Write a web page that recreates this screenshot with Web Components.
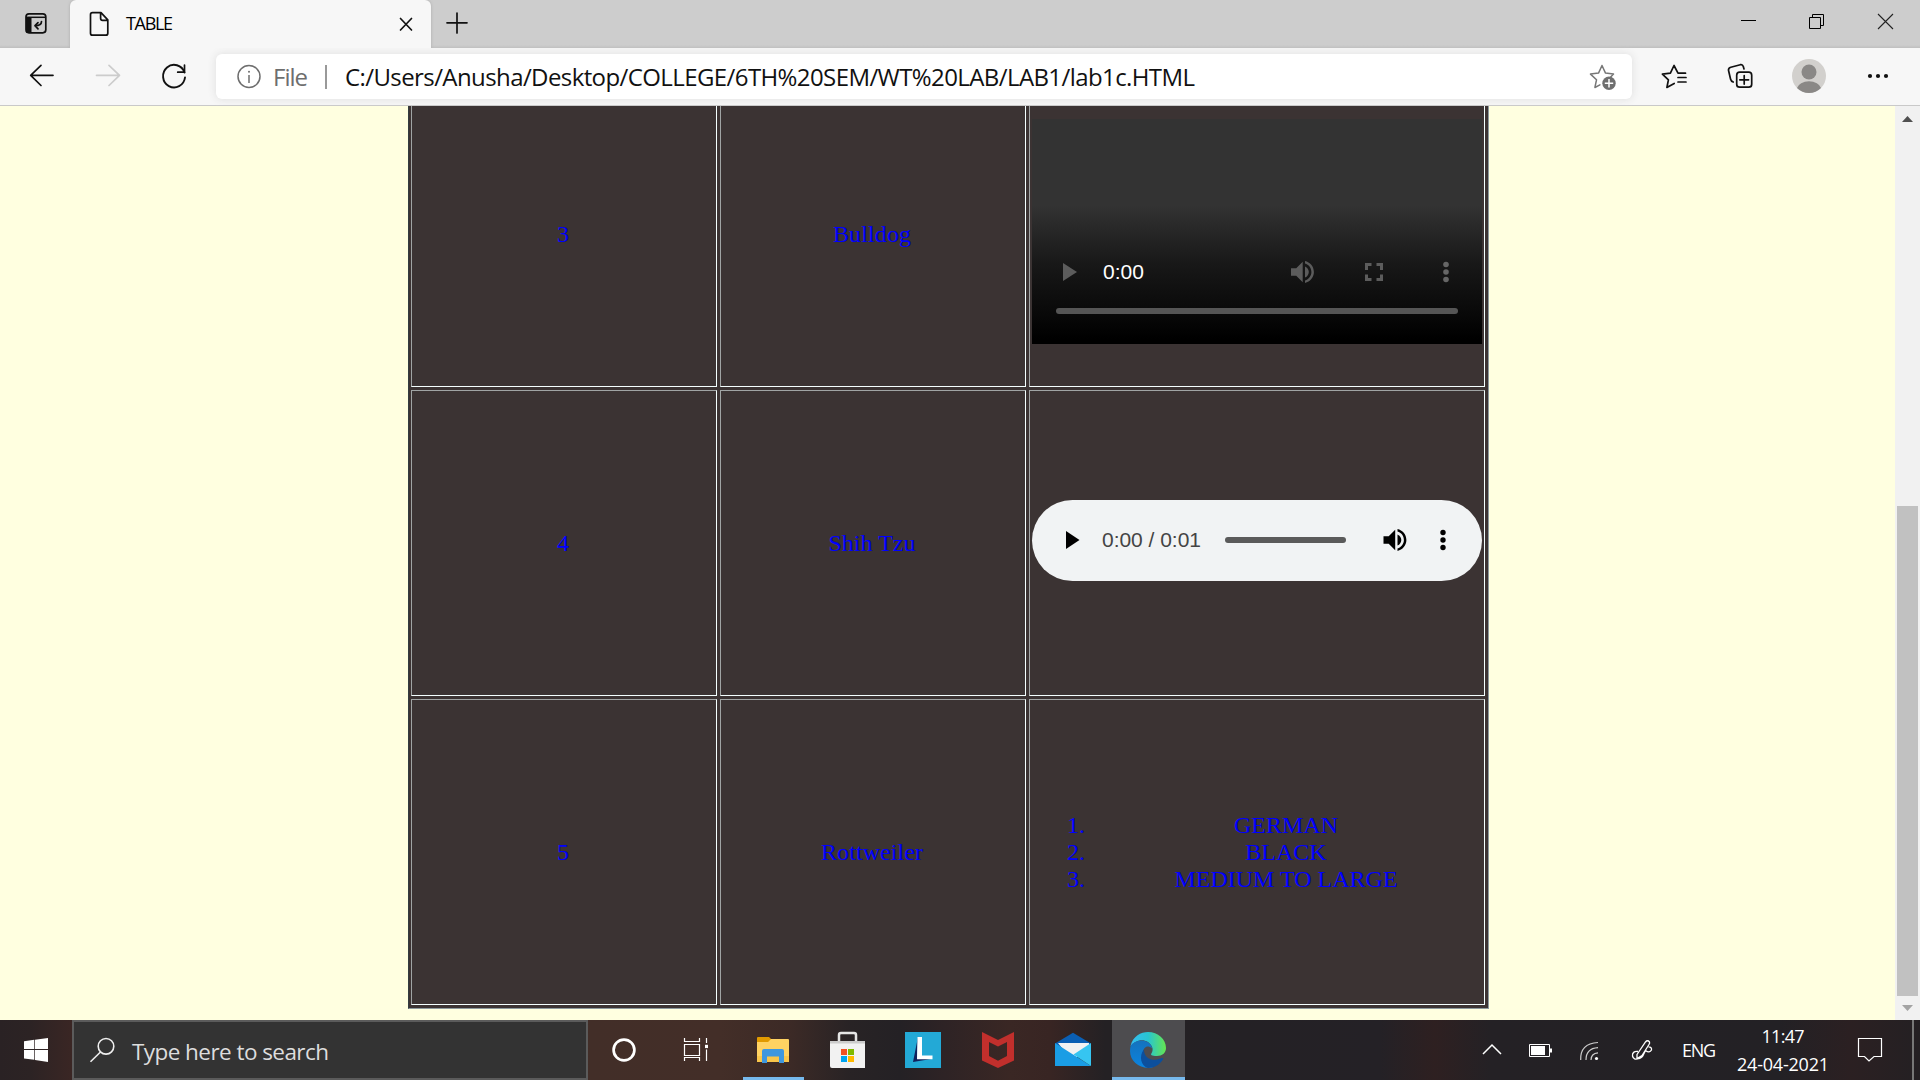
<!DOCTYPE html>
<html lang="en">
<head>
<meta charset="utf-8">
<title>TABLE</title>
<style>
html,body{margin:0;height:100%;overflow:hidden;background:#ffffe0}
body{font-family:"Open Sans","Noto Sans",sans-serif}
</style>
</head>
<body>
<desktop-screen></desktop-screen>
<script>
// Icon artwork: [x, y, width, height, markup]; each viewBox is in screen units.
const K='fill="none" stroke="#111" stroke-width="1.7" stroke-linecap="round" stroke-linejoin="round"';
const W='fill="none" stroke="#fff" stroke-width="1.2"';
const speaker=(x,y,c)=>`<g transform="translate(${x} ${y})" fill="${c}"><path d="M0 7.2h5.2L11.7.8v20.4L5.2 14.8H0z"/><path d="M14 5.4c2.3 1 3.8 3.1 3.8 5.6s-1.500 4.600-3.800 5.600z"/><path d="M14 .1c5 1.100 8.900 5.500 8.900 10.900S19 20.800 14 21.900v-2.500c3.700-1.100 6.400-4.400 6.400-8.400S17.700 3.700 14 2.600z"/></g>`;
const ICONS={
 tabs:[25,0,22,47,`<rect x="26" y="13.800" width="19.800" height="19" rx="3" ${K}/><path d="M26 17h5.500v16H28q-2 0-2-3z" fill="#111"/><path d="M26 17.300h20" stroke="#111" stroke-width="1.500"/><path d="M41.500 21.500q0 4.200-6.500 4.200m3-3-3 3 3 3.200" ${K}/>`],
 doc:[89,0,20,47,`<path d="M92.500 12.700h8.500l6.800 7.200v13.300q0 2-2 2H92.500q-2 0-2-2V14.700q0-2 2-2zM100.600 13v5.200q0 2.200 2 2.200h5" ${K}/>`],
 close:[399,0,14,47,`<path d="M400.500 18.500l11 11.500m0-11.500-11 11.500" ${K}/>`],
 plus:[446,0,22,47,`<path d="M457 13v20M447 22.800h20" ${K}/>`],
 min:[1740,0,17,47,`<path d="M1741 20.500h15" stroke="#000"/>`],
 restore:[1808,0,17,47,`<path d="M1809.500 17.500h11v11h-11zM1812.500 17v-2.500h11v11h-3" fill="none" stroke="#000"/>`],
 xwin:[1877,0,17,47,`<path d="M1878 14l15 15m0-15-15 15" stroke="#222" stroke-width="1.100"/>`],
 back:[29,48,26,57,`<path d="M53 75.300H31m10-10-10.300 10L41 85.500" ${K}/>`],
 fwd:[95,48,26,57,`<path d="M96.500 75.300h23m-10.500-10 10.500 10-10.500 10.200" ${K.replace('#111','#ccc')}/>`],
 reload:[161,48,26,57,`<path d="M184.500 72.500a11 11.300 0 1 0 .5 5" ${K.replace('1.7','1.9')}/><path d="M184.500 65v7.200h-6.800" ${K}/>`],
 info:[236,54,26,45,`<circle cx="249" cy="76.500" r="11" fill="none" stroke="#6e6e6e" stroke-width="1.500"/><path d="M249 75v8" stroke="#6e6e6e" stroke-width="1.500"/><circle cx="249" cy="71.700" r="1" fill="#6e6e6e"/>`],
 staradd:[1589,54,28,45,`<path d="M1602 65.500l3.500 7.600 8 1-3 3.200M1602 65.500l-3.500 7.600-8 1 6 5.700-1.600 7.700 5-2.600" ${K.replace('#111','#777').replace('1.7','1.5')}/><circle cx="1609" cy="83.200" r="6.700" fill="#6f6f6f"/><path d="M1609 79v8.400M1604.800 83.200h8.400" stroke="#fff" stroke-width="1.500"/>`],
 fav:[1661,48,26,57,`<path d="M1685.500 73.200h-7.500l-4-7.700-3.600 7.600-8 1 6 5.700-1.500 7.700 7.300-4M1678 77.500h8M1678 82h8" ${K}/>`],
 coll:[1727,48,26,57,`<rect x="1736.700" y="72.200" width="15" height="15" rx="3" ${K}/><path d="M1744.200 75.500v8.600M1739.800 79.800h8.800M1744 69l-.7-2.500q-.7-2.300-3-1.800l-9.500 2.500q-2.800.8-2.200 3.500l2 8.500q.5 2 2.600 2.800" ${K}/>`],
 avatar:[1791,48,36,57,`<circle cx="1809" cy="76" r="17" fill="#d2d0cd"/><circle cx="1809" cy="72" r="7.500" fill="#8a8886"/><path d="M1797 88a12.200 8.200 0 0 1 24 0 17 17 0 0 1-24 0z" fill="#8a8886"/>`],
 dots:[1867,48,22,57,`<g fill="#111"><circle cx="1870" cy="76" r="2.100"/><circle cx="1878" cy="76" r="2.100"/><circle cx="1886" cy="76" r="2.100"/></g>`],
 vplay:[1063,250,15,45,`<path d="M1063 263v18l14-9z" fill="#5c5c5c"/>`],
 vvol:[1290,250,25,45,speaker(1291,261,'#5c5c5c')],
 vfull:[1364,250,20,45,`<path d="M1366.500 270v-5.500h5m5 0h5v5.500m0 4.500v5h-5m-5 0h-5v-5" fill="none" stroke="#5c5c5c" stroke-width="3"/>`],
 vdots:[1442,250,8,45,`<g fill="#666"><circle cx="1446" cy="264.500" r="2.800"/><circle cx="1446" cy="272" r="2.800"/><circle cx="1446" cy="279.500" r="2.800"/></g>`],
 aplay:[1065,500,16,81,`<path d="M1066 531v18l13.500-9z"/>`],
 avol:[1383,500,25,81,speaker(1383.5,529,'#000')],
 adots:[1439,500,8,81,`<circle cx="1443" cy="532.500" r="2.700"/><circle cx="1443" cy="540" r="2.700"/><circle cx="1443" cy="547.500" r="2.700"/>`],
 up:[1895,106,25,28,`<path d="M1902 122l5.500-6 5.500 6z" fill="#505050"/>`],
 down:[1895,998,25,22,`<path d="M1902 1005l5.500 6 5.500-6z" fill="#a3a3a3"/>`],
 start:[24,1020,24,60,`<path d="M24 1041.200l10.300-1.400v9.200H24zm11-1.500 13-1.700v11H35zM24 1050h10.300v9.800L24 1058.500zm11 0h13v12l-13-1.900z" fill="#fff"/>`],
 search:[89,1022,27,56,`<circle cx="106" cy="1046.300" r="7.800" fill="none" stroke="#eee" stroke-width="1.600"/><path d="M100.500 1052l-10 9.800" stroke="#eee" stroke-width="1.600"/>`],
 cortana:[611,1020,26,60,`<circle cx="624" cy="1050" r="10.400" fill="none" stroke="#fff" stroke-width="2.700"/>`],
 tasks:[683,1020,26,60,`<path d="M684.500 1038v3.500h15V1038M684.500 1044.500h15v11h-15zM684.500 1061v-3.500h15v3.500M706.500 1038v5M706.500 1049.500v11.500" ${W}/><path d="M705 1044.800h3v3.300h-3z" fill="#fff"/>`],
 folder:[756,1020,34,60,`<path d="M757 1038q0-1 1-1h11l3 3-3 4h-12z" fill="#e19a00"/><path d="M757 1042h11l3-3h17q1 0 1 1v22h-32z" fill="#ffd262"/><path d="M757 1056h32v6h-32z" fill="#f9c64b"/><path d="M762 1063v-12q0-2 2-2h18q2 0 2 2v12h-5v-6.500h-12v6.500z" fill="#3e97df"/>`],
 store:[829,1020,37,60,`<path d="M839 1042v-7q0-2 2-2h13q2 0 2 2v7" fill="none" stroke="#e5e5e5" stroke-width="2.500"/><path d="M830 1041h35v27h-33q-2 0-2-2z" fill="#f2f2f2"/><path d="M830 1041h35v2.500h-35z" fill="#ccc"/><path d="M841 1049h6v6h-6z" fill="#f25022"/><path d="M848 1049h6v6h-6z" fill="#7fba00"/><path d="M841 1056h6v6h-6z" fill="#00a4ef"/><path d="M848 1056h6v6h-6z" fill="#ffb900"/>`],
 lapp:[905,1020,36,60,`<path d="M905 1032h36v36h-36z" fill="#23a9d6"/><path d="M918 1037l-5 25 18-3-14-1z" fill="#10205c"/><path d="M917.500 1037h4.500v18.500h10.500v3.700H917z" fill="#fff"/>`],
 mcafee:[981,1020,34,60,`<path d="M982 1032l16 8 16-8v28.500l-16 7.500-16-7.500zM989 1042v14l9 4.700 9-4.700v-14l-9 4.500z" fill="#c12f2c" fill-rule="evenodd"/>`],
 mail:[1054,1020,38,60,`<path d="M1055 1043.500l18-10.800 18 10.800-4 4h-28z" fill="#0a5fb4"/><path d="M1058 1043h31v8l-12 6h-8z" fill="#f2f2f2"/><path d="M1055 1043l18 11.500 18 11.500h-36z" fill="#1a9de5"/><path d="M1091 1043l-17.500 11.500 17.500 11.500z" fill="#36c5f1"/>`],
 edge:[1129,1020,38,60,`<defs><linearGradient id="a" x1="0" x2="1"><stop offset="0" stop-color="#35bdf3"/><stop offset=".5" stop-color="#28c5d0"/><stop offset="1" stop-color="#65e650"/></linearGradient><linearGradient id="b" x1="0" x2="0" y1="0" y2="1"><stop offset="0" stop-color="#1572bd"/><stop offset="1" stop-color="#0a84e0"/></linearGradient></defs><path d="M1130.500 1046C1133 1036 1141 1032 1148 1032c10 0 18 7 18 16 0 5-4 8-9 8-5.500 0-7-1.200-5.300-3 2.300-4 .3-8-3.700-11-6-4-13.500-1-17.500 4z" fill="url(#a)"/><path d="M1130.700 1045.500c5.300-6.500 15.300-6.500 19.300-1.500 2 2 2 4.500 2 4.500-4-4-9-1.500-9 4.500 0 7 4 13.500 10 14.300-12 2.700-23-5.300-23-16.300q0-3 .7-5.500z" fill="url(#b)"/><path d="M1144 1049.500c-.3 7.500 6 11.500 13 10 3.500-.8 6-2.500 6.300-.7-3.300 6.200-9.500 9.200-15.300 9.200-7-2-9.500-12-4-18.500z" fill="#0c4f9c"/>`],
 chev:[1482,1020,20,60,`<path d="M1483 1054l9-9 9 9" ${W.replace('1.2','1.5')}/>`],
 batt:[1528,1020,25,60,`<path d="M1529.500 1044.500h20v12h-20z" ${W.replace('1.2','1')}/><path d="M1531 1046h14v9h-14zM1550 1048.500h2v4h-2z" fill="#fff"/>`],
 wifi:[1579,1020,20,60,`<path d="M1580.700 1060q-.7-16.500 17.300-17.500M1586 1060q0-11.500 12-12.300M1591 1060q0-6.700 7-7.200" ${W.replace('#fff','#ccc')}/><circle cx="1596.500" cy="1058.500" r="1.600" fill="#fff"/>`],
 pen:[1631,1020,23,60,`<path d="M1637 1054.500l8.500-12.500q2-2.500 4 0 .5 1-.5 2.500l-7 11-5 3zM1638 1051.500q-6-.5-5.500 4.500 1 4.500 6.500 2.500 3.500-1 4.500-4l2-4q4 3 6-.5.500-3-3-3.200" ${W.replace('1.2','1.3')}/>`],
 note:[1857,1020,26,60,`<path d="M1858.500 1038.500h23v18h-7.500l-5 4.500-4.500-4.500h-6z" ${W}/>`],
};
const comp=(name,html,after)=>customElements.define(name,class extends HTMLElement{
 connectedCallback(){
  if(this.shadowRoot)return;
  const t=document.createElement('template');t.innerHTML=html;
  this.attachShadow({mode:'open'}).append(t.content.cloneNode(true));
  if(after)after(this);
 }});

comp('ui-icon','<style>:host{display:block;flex:none}svg{display:block}</style>',el=>{
 const [x,y,w,h,m]=ICONS[el.getAttribute('name')];
 const d=document.createElement('div');
 d.innerHTML=`<svg width="${w}" height="${h}" viewBox="${x} ${y} ${w} ${h}">${m}</svg>`;
 el.shadowRoot.append(d.firstChild);
});

comp('desktop-screen',`<style>:host{display:flex;flex-direction:column;width:1920px;height:1080px;overflow:hidden}</style>
<tab-strip></tab-strip><tool-bar></tool-bar><page-view></page-view><task-bar></task-bar>`);

comp('tab-strip',`<style>
:host{display:flex;height:48px;flex:none;background:linear-gradient(#cdcdcd 45px,#bfbfbf)}
.pin{width:70px;display:flex;padding-left:25px;box-sizing:border-box}
.tab{position:relative;display:flex;width:361px;background:#f7f7f7;border-radius:6px 6px 0 0;box-shadow:0 0 3px #aaa;clip-path:inset(0 -4px)}
.t{font-size:18px;line-height:24px;margin:11px 0 0 17px;width:273px}
</style><div class="pin"><ui-icon name="tabs"></ui-icon></div>
<div class="tab"><ui-icon name="doc" style="margin-left:19px"></ui-icon><div class="t"><fit-text w="47">TABLE</fit-text></div><ui-icon name="close"></ui-icon></div>
<ui-icon name="plus" style="margin-left:15px"></ui-icon>
<ui-icon name="min" style="margin-left:auto"></ui-icon><ui-icon name="restore" style="margin-left:51px"></ui-icon><ui-icon name="xwin" style="margin:0 26px 0 52px"></ui-icon>`);

comp('tool-bar',`<style>
:host{display:flex;height:58px;flex:none;box-sizing:border-box;background:#f7f7f7;border-bottom:1px solid #c9c9c9;font-size:24px;line-height:32px}
.addr{display:flex;width:1416px;height:45px;margin:6px 29px 0 29px;background:#fff;border-radius:6px;box-shadow:0 0 8px #ddd;box-sizing:border-box}
.f{color:#6e6e6e;margin:7px 0 0 11px;width:52px}
.s{width:2px;height:24px;background:#999;margin-top:11px}
.u{color:#111;margin:7px 0 0 18px;width:1244px}
</style>
<ui-icon name="back" style="margin-left:29px"></ui-icon><ui-icon name="fwd" style="margin-left:40px"></ui-icon><ui-icon name="reload" style="margin-left:40px"></ui-icon>
<div class="addr"><ui-icon name="info" style="margin-left:20px"></ui-icon><div class="f"><fit-text w="35">File</fit-text></div><div class="s"></div><div class="u"><fit-text w="850">C:/Users/Anusha/Desktop/COLLEGE/6TH%20SEM/WT%20LAB/LAB1/lab1c.HTML</fit-text></div><ui-icon name="staradd"></ui-icon></div>
<ui-icon name="fav"></ui-icon><ui-icon name="coll" style="margin-left:40px"></ui-icon><ui-icon name="avatar" style="margin-left:38px"></ui-icon><ui-icon name="dots" style="margin-left:40px"></ui-icon>`);

comp('page-view',`<style>
:host{display:flex;height:914px;flex:none;overflow:hidden;background:#ffffe0}
.doc{display:flex;flex-direction:column;justify-content:flex-end;width:1895px;box-sizing:border-box;padding:0 0 11px 408px;height:914px;overflow:hidden}
</style><div class="doc"><dog-table></dog-table></div><scroll-bar></scroll-bar>`);

comp('scroll-bar',`<style>
:host{display:flex;flex-direction:column;align-items:center;width:25px;background:#f1f1f1}
.g{flex:1}.th{width:21px;height:490px;background:#c1c1c1}
</style><ui-icon name="up"></ui-icon><div class="g"></div><div class="th"></div><ui-icon name="down" style="margin-top:2px"></ui-icon>`);

comp('dog-table',`<style>
:host{display:grid;flex:none;grid-template-columns:306px 306px 456px;grid-auto-rows:306px;gap:3px;width:1081px;height:931px;box-sizing:border-box;padding:2px 3px 3px 2px;background:#3b3333;border:1px solid #8d9a9e;border-left-color:#333d40;color:#00f;font:24px/27px "Liberation Serif",serif}
ol{margin:0 2px 0 0;padding:0 0 0 60px;width:390px;text-align:center}
dog-cell:not(:nth-of-type(3n)){padding-right:2px}
</style>
<dog-cell>3</dog-cell><dog-cell><fit-text w="78">Bulldog</fit-text></dog-cell><dog-cell><video-box></video-box></dog-cell>
<dog-cell>4</dog-cell><dog-cell><fit-text w="87">Shih Tzu</fit-text></dog-cell><dog-cell><audio-box></audio-box></dog-cell>
<dog-cell>5</dog-cell><dog-cell><fit-text w="102">Rottweiler</fit-text></dog-cell><dog-cell><ol><li>GERMAN</li><li>BLACK</li><li>MEDIUM TO LARGE</li></ol></dog-cell>`);

comp('dog-cell',`<style>:host{display:flex;align-items:center;justify-content:center;box-sizing:border-box;border:1px solid #f4ffff;border-top-color:#a0a4a4;border-left-color:#a0a4a4}</style><slot></slot>`);

comp('video-box',`<style>
:host{display:flex;flex-direction:column;justify-content:flex-end;width:450px;height:225px;margin-bottom:5px;background:linear-gradient(#333 0,#333 86px,#262626 114px,#181818 145px,#0a0a0a 190px,#000 220px)}
.c{display:flex;height:45px}
.t{color:#fff;font:21px/24px "Liberation Sans",sans-serif;margin:10px 0 0 25px;width:187px}
.tr{height:6px;border-radius:3px;background:#555;margin:13px 24px 30px}
</style><div class="c"><ui-icon name="vplay" style="margin-left:31px"></ui-icon><div class="t"><fit-text w="41">0:00</fit-text></div><ui-icon name="vvol"></ui-icon><ui-icon name="vfull" style="margin-left:49px"></ui-icon><ui-icon name="vdots" style="margin-left:58px"></ui-icon></div><div class="tr"></div>`);

comp('audio-box',`<style>
:host{display:flex;width:450px;height:81px;margin-bottom:5px;border-radius:41px;background:#f1f3f4}
.t{color:#444;font:21px/24px "Liberation Sans",sans-serif;margin:28px 0 0 21px;width:123px}
.tr{width:121px;height:6px;border-radius:3px;background:#5a5a5a;margin-top:37px}
</style><ui-icon name="aplay" style="margin-left:33px"></ui-icon><div class="t"><fit-text w="99">0:00 / 0:01</fit-text></div><div class="tr"></div><ui-icon name="avol" style="margin-left:37px"></ui-icon><ui-icon name="adots" style="margin-left:31px"></ui-icon>`);

comp('task-bar',`<style>
:host{display:flex;height:60px;flex:none;color:#fff;background:linear-gradient(90deg,#2a2224 0,#2c2324 30px,#3a2624 72px,#422e28 590px,#432e28 720px,#3c2a26 790px,#282325 850px,#242125 900px,#2e2325 945px,#3a2724 1010px,#382523 1050px,#242124 1105px,#242126 1380px,#2e2021 1435px,#242125 1490px,#232125 1780px,#2b2022 1850px,#242023 1920px)}
.s{display:flex;width:516px;height:60px;box-sizing:border-box;border:2px solid #5b5b5b;background:#333;margin-left:24px}
.s div{font-size:22.5px;line-height:30px;color:#ddd;margin:15px 0 0 16px}
.b{display:flex;justify-content:center;height:60px;box-shadow:inset 0 -3px #76b9ed}
.f{width:61px;margin-left:34px}.e{width:73px;margin-left:20px;background:#4d4c4f;box-shadow:inset 0 -3px #76b9ed}
.f ui-icon{margin-right:2px}.e ui-icon{margin-right:1px}
.l{font-size:18px;line-height:24px}
.clock{display:flex;flex-direction:column;align-items:center;width:92px;margin:2px 0 0 21px;font-size:18px;line-height:28px}
.d{width:2px;height:60px;background:#777;margin:0 6px 0 29px}
</style>
<ui-icon name="start" style="margin-left:24px"></ui-icon>
<div class="s"><ui-icon name="search" style="margin-left:15px"></ui-icon><div><fit-text w="197">Type here to search</fit-text></div></div>
<ui-icon name="cortana" style="margin-left:23px"></ui-icon><ui-icon name="tasks" style="margin-left:46px"></ui-icon>
<div class="b f"><ui-icon name="folder"></ui-icon></div>
<ui-icon name="store" style="margin-left:25px"></ui-icon><ui-icon name="lapp" style="margin-left:39px"></ui-icon><ui-icon name="mcafee" style="margin-left:40px"></ui-icon><ui-icon name="mail" style="margin-left:39px"></ui-icon>
<div class="b e"><ui-icon name="edge"></ui-icon></div>
<ui-icon name="chev" style="margin-left:auto"></ui-icon><ui-icon name="batt" style="margin-left:26px"></ui-icon><ui-icon name="wifi" style="margin-left:26px"></ui-icon><ui-icon name="pen" style="margin-left:32px"></ui-icon>
<div class="l" style="margin:18px 0 0 28px"><fit-text w="34">ENG</fit-text></div>
<div class="clock"><fit-text w="43">11:47</fit-text><fit-text w="92">24-04-2021</fit-text></div>
<ui-icon name="note" style="margin-left:28px"></ui-icon><div class="d"></div>`);

// Spreads the letters so that the run of text takes exactly the width asked for.
comp('fit-text','<style>:host{display:inline-block;white-space:pre}</style><slot></slot>',el=>{
 const w=+el.getAttribute('w'),n=el.textContent.length;
 const now=el.getBoundingClientRect().width;
 const s=(w-now)/(n-1);
 el.style.letterSpacing=s+'px';
 el.style.marginRight=-s+'px';
});
</script>
</body>
</html>
